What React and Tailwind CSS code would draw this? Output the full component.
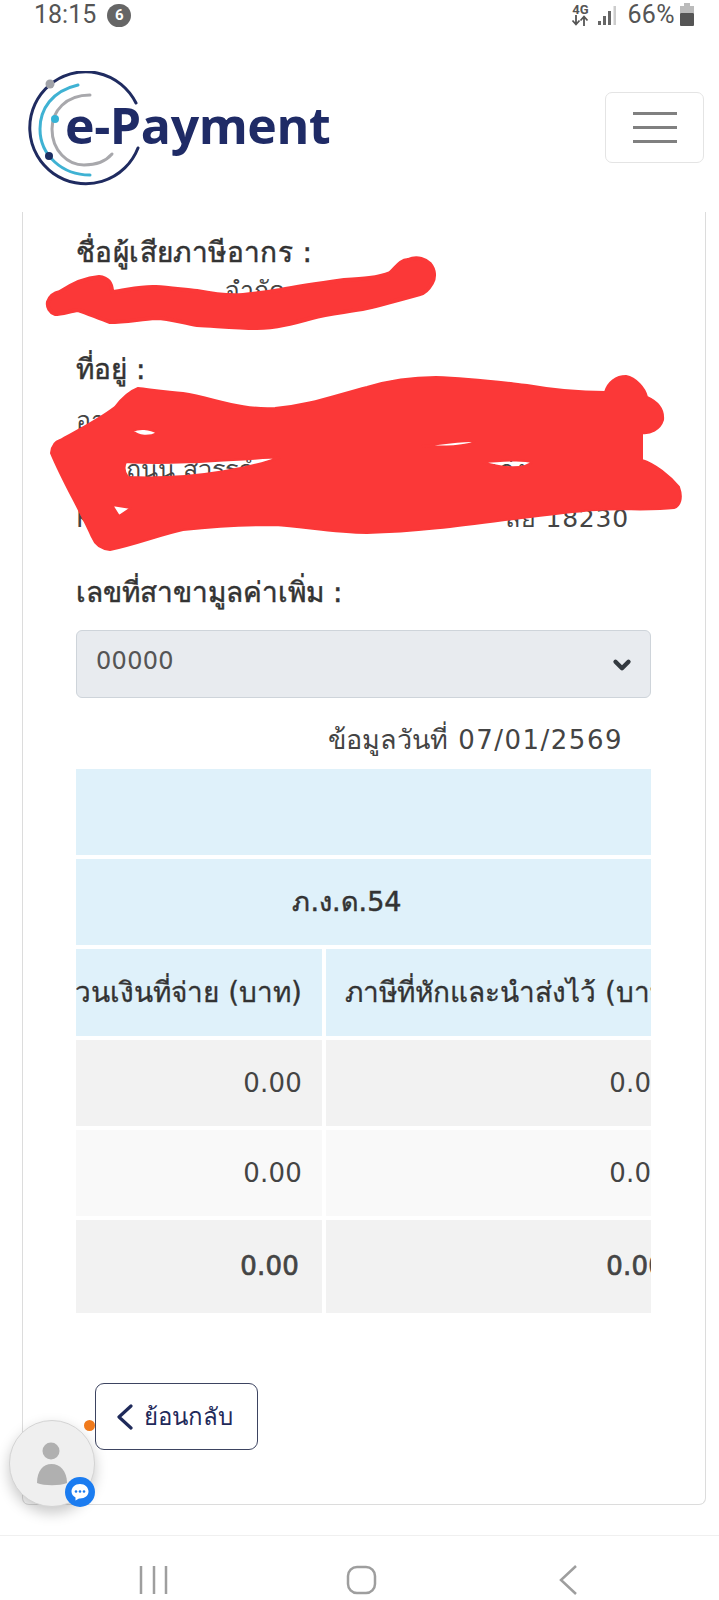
import React from "react";
import { ChevronDown } from "lucide-react";

const bodyFont = { fontFamily: '"DejaVu Sans", "Noto Sans", "Noto Sans CJK SC", sans-serif' };

const Logo = () => (
  <div className="relative w-[310px] h-[116px]">
    <svg width="116" height="116" viewBox="28 70 116 116" fill="none" className="absolute left-0 top-0">
      <path d="M136 102 A 56 56 0 1 0 138 147" stroke="#1f2b60" strokeWidth="3" strokeLinecap="round" />
      <path d="M78 84 C 52 90 40 108 40 128 C 40 154 62 174 90 174" stroke="#3fb2d3" strokeWidth="3" strokeLinecap="round" />
      <path d="M90 94 C 66 94 52 110 52 128 C 52 150 68 164 84 164 C 96 164 106 160 112 153" stroke="#a8a8ac" strokeWidth="3" strokeLinecap="round" />
      <circle cx="50" cy="83" r="4.5" fill="#a0a2a8" />
      <circle cx="55" cy="118" r="4" fill="#35b3d6" />
      <circle cx="49" cy="155" r="4" fill="#1c2f63" />
    </svg>
    <span
      className="absolute left-[37px] top-[19px] text-[50px] leading-[70px] font-bold text-[#1f2b66] whitespace-nowrap tracking-[-0.4px]"
      style={{ fontFamily: '"Open Sans", sans-serif' }}
    >
      e-Payment
    </span>
  </div>
);

const StatusBar = () => (
  <div className="h-[30px] flex items-center justify-between pl-[34px] pr-[24px] text-[#555]" style={{ fontFamily: "Roboto, sans-serif" }}>
    <div className="flex items-center gap-[11px]">
      <span className="text-[25px] leading-[28px]">18:15</span>
      <span className="w-[24px] h-[23px] rounded-full bg-[#666] text-white text-[15px] font-bold flex items-center justify-center">6</span>
    </div>
    <div className="flex items-center">
      <div className="flex flex-col items-center w-[18px] font-bold text-[#555]">
        <span className="text-[13px] leading-[11px]">4G</span>
        <svg width="18" height="11" viewBox="0 0 18 11" fill="none" stroke="#555" strokeWidth="1.8">
          <path d="M5 0 V9 M1.500 5.500 L5 9.500 L8.500 5.500 M13 11 V2 M9.500 5.500 L13 1.500 L16.500 5.500" />
        </svg>
      </div>
      <svg width="22" height="22" viewBox="0 0 22 22" className="ml-[8px]">
        <rect x="1" y="17" width="3" height="4" fill="#666" />
        <rect x="6" y="12" width="3" height="9" fill="#666" />
        <rect x="11" y="7" width="3" height="14" fill="#666" />
        <rect x="16.500" y="2" width="2.500" height="19" fill="#ccc" />
      </svg>
      <span className="text-[25px] leading-[28px] ml-[8px] tracking-[0.4px]">66%</span>
      <svg width="16" height="24" viewBox="0 0 16 24" className="ml-[4px]">
        <rect x="5" y="0" width="6" height="3" fill="#bbb" />
        <rect x="1" y="3" width="14" height="7" fill="#bbb" />
        <rect x="1" y="10" width="14" height="13" rx="1" fill="#555" />
      </svg>
    </div>
  </div>
);

const Header = () => (
  <div className="h-[182px] flex items-start justify-between pl-[28px] pr-[15px] pt-[41px]">
    <Logo />
    <button className="w-[99px] h-[71px] mt-[21px] border border-[#e4e4e4] rounded-[7px] flex flex-col items-center justify-center gap-[11px]">
      <span className="block w-[44px] h-[3px] bg-[#808080]" />
      <span className="block w-[44px] h-[3px] bg-[#808080]" />
      <span className="block w-[44px] h-[3px] bg-[#808080]" />
    </button>
  </div>
);

const Label = ({ children, className = "" }) => (
  <div className={"h-[36px] leading-[36px] text-[28px] [-webkit-text-stroke:0.5px] text-[#333] " + className}>{children}</div>
);

const ValueCell = ({ children, bold, bg }) => (
  <div className={"h-full flex items-center justify-end text-[26px] tracking-[0.2px] text-[#444] " + bg + (bold ? " pr-[23px] [-webkit-text-stroke:0.7px]" : " pr-[20px]")}>
    {children}
  </div>
);

const InvoiceTable = () => {
  const rows = [
    { bg: "bg-[#f2f2f2]", h: "h-[86px]" },
    { bg: "bg-[#f9f9f9]", h: "h-[86px]" },
    { bg: "bg-[#f2f2f2]", h: "h-[93px]", bold: true },
  ];
  return (
    <div className="w-[575px] overflow-hidden">
      <div className="-ml-[70px] w-[682px] flex flex-col gap-[4px]">
        <div className="h-[86px] bg-[#dff1fa]" />
        <div className="h-[86px] bg-[#dff1fa] flex items-center justify-center text-[27px] [-webkit-text-stroke:0.5px] text-[#333]">ภ.ง.ด.54</div>
        <div className="grid grid-cols-[316px_362px] gap-x-[4px] h-[87px] text-[28px] [-webkit-text-stroke:0.3px] text-[#333]">
          <div className="bg-[#dff1fa] flex items-center justify-end pr-[20px] whitespace-nowrap">จำนวนเงินที่จ่าย (บาท)</div>
          <div className="bg-[#dff1fa] flex items-center pl-[19px] whitespace-nowrap">ภาษีที่หักและนำส่งไว้ (บาท)</div>
        </div>
        {rows.map((r, i) => (
          <div key={i} className={"grid grid-cols-[316px_362px] gap-x-[4px] " + r.h}>
            <ValueCell bold={r.bold} bg={r.bg}>0.00</ValueCell>
            <ValueCell bold={r.bold} bg={r.bg}>0.00</ValueCell>
          </div>
        ))}
      </div>
    </div>
  );
};

const Card = () => (
  <div className="ml-[22px] w-[684px] h-[1293px] border-x border-b border-[#dcdcdc] rounded-b-[7px] pl-[53px] pr-[54px] pt-[23px] text-[#444]">
    <Label className="tracking-[0.4px]">ชื่อผู้เสียภาษีอากร :</Label>
    <div className="w-[209px] h-[40px] leading-[40px] text-[25px] text-right whitespace-nowrap">จำกัด</div>

    <Label className="mt-[41px]">ที่อยู่ :</Label>
    <div className="mt-[8px] text-[25px] leading-[49px]">
      <div className="h-[49px]">อาคาร</div>
      <div className="h-[49px] flex justify-between w-[450px] pl-[50px]">
        <span>ถนน สวรรค์</span>
        <span>แก่ง</span>
      </div>
      <div className="h-[49px] flex justify-between w-[553px] tracking-[0.8px]">
        <span>K</span>
        <span>ลัย 18230</span>
      </div>
    </div>

    <Label className="mt-[32px]">เลขที่สาขามูลค่าเพิ่ม :</Label>
    <div className="mt-[19px] h-[68px] bg-[#e8ebef] border border-[#ced4da] rounded-[6px] flex items-center justify-between pl-[19px] pr-[15px] text-[24px] tracking-[0.3px] text-[#555]">
      <span className="-mt-[6px]">00000</span>
      <ChevronDown size={26} strokeWidth={4} className="text-[#343a40] mt-[2px]" />
    </div>
    <div className="h-[71px] pt-[14px] pr-[28px] flex items-center justify-end gap-[10px] text-[26px] text-[#444]">
      <span className="text-[27px]">ข้อมูลวันที่</span>
      <span className="tracking-[1.500px]">07/01/2569</span>
    </div>

    <InvoiceTable />

    <button className="mt-[70px] ml-[19px] w-[163px] h-[67px] border-[1.5px] border-[#3d4461] rounded-[9px] flex items-center pl-[20px] gap-[10px] text-[24px] text-[#1f2a5a]">
      <svg width="18" height="26" viewBox="0 0 18 26" fill="none">
        <path d="M15 2 L3 13 L15 24" stroke="#1f2a5a" strokeWidth="3.2" strokeLinejoin="round" strokeLinecap="round" />
      </svg>
      <span>ย้อนกลับ</span>
    </button>
  </div>
);

const BottomNav = () => (
  <div className="mt-[30px] flex-1 border-t border-[#f0f0f0] flex items-start pt-[29px]">
    <svg width="719" height="30" viewBox="0 0 719 30" fill="none" stroke="#9e9e9e" strokeWidth="2.5">
      <path d="M141 1 V29 M154 1 V29 M166 1 V29" />
      <rect x="348" y="2" width="27" height="26" rx="9" />
      <path d="M576 1 L561 15 L576 29" />
    </svg>
  </div>
);

const ChatBubble = () => (
  <div className="absolute left-[9px] top-[1420px] w-[86px] h-[87px] rounded-full bg-[#efefef] border border-[#d4d4d4] shadow-[0_6px_14px_rgba(0,0,0,0.22)]">
    <svg width="84" height="85" viewBox="0 0 84 85" className="absolute left-0 top-0">
      <ellipse cx="41" cy="30" rx="8.5" ry="8.5" fill="#b0b0b0" />
      <path d="M27 62 C27 50 33 43 41.500 43 C50 43 57 50 57 62 C50 65 34 65 27 62 Z" fill="#b0b0b0" />
    </svg>
    <div className="absolute -right-[1px] -bottom-[1px] w-[30px] h-[30px] rounded-full bg-[#1b7cf0] flex items-center justify-center">
      <svg width="20" height="20" viewBox="0 0 20 20">
        <path d="M10 2 C15 2 18.500 5.500 18.500 9.500 C18.500 13.500 15 16.500 10 16.500 L9 16.500 L5.500 18.500 L5.500 15.500 C3 14 1.500 12 1.500 9.500 C1.500 5.500 5 2 10 2 Z" fill="#fff" />
        <circle cx="6" cy="9.500" r="1.300" fill="#1b7cf0" />
        <circle cx="10" cy="9.500" r="1.300" fill="#1b7cf0" />
        <circle cx="14" cy="9.500" r="1.300" fill="#1b7cf0" />
      </svg>
    </div>
  </div>
);

// red marker scribbles drawn over the name and address
const Scribbles = () => (
  <svg width="719" height="600" viewBox="0 0 719 600" className="absolute left-0 top-0 pointer-events-none">
    <path
      fill="#fb3838"
      stroke="#fb3838"
      strokeWidth="4"
      strokeLinejoin="round"
      d="M48 302 C50 296 55 293 60 292 C72 284 85 278 99 277 C108 278 112 282 112 292 C128 290 142 286 156 287 C170 288 185 290 197 291 C212 294 228 296 243 295 C256 294 268 292 280 290 C300 286 322 283 344 280 C362 279 378 278 390 273 C396 268 400 260 408 260 C418 256 426 260 430 264 C435 270 435 278 432 283 C428 290 425 293 420 294 C402 299 384 304 367 308 C348 312 330 313 312 318 C294 323 276 328 257 328 C237 328 217 326 197 325 C183 323 170 318 156 318 C140 319 125 322 110 322 C98 318 88 313 78 310 C70 311 62 314 55 314 C50 312 47 307 48 302 Z"
    />
    <path
      fillRule="evenodd"
      fill="#fb3838"
      stroke="#fb3838"
      strokeWidth="2"
      strokeLinejoin="round"
      d="M138 388 C155 390 170 392 183 393 C215 398 240 410 275 408 C310 405 335 395 367 387 C390 380 410 377 436 377 C470 378 500 382 527 385 C555 390 580 392 605 392 C608 382 616 376 626 376 C636 378 645 388 647 397 C658 402 664 410 663 420 C660 430 650 434 642 433 L642 460 C655 464 670 476 679 487 C683 498 680 506 674 508 C650 511 620 508 596 510 C565 512 535 517 505 520 C460 526 415 532 367 533 C335 533 305 527 275 525 C245 525 212 527 183 530 C160 535 135 545 110 550 C100 549 95 545 92 537 C80 510 62 480 51 453 C52 445 56 441 60 440 C78 430 98 420 115 407 C122 398 130 391 138 388 Z
      M133 431 C138 428 150 428 157 433 C150 437 138 437 133 431 Z
      M126 462 C170 465 230 460 281 457 C260 465 200 480 128 477 C124 472 124 466 126 462 Z
      M422 446 C440 444 460 440 475 441 C470 447 440 447 422 446 Z
      M482 462 C495 462 520 458 532 462 C525 470 500 468 482 462 Z
      M112 505 L131 508 L119 516 Z"
    />
  </svg>
);

const App = () => {
  return (
    <div className="relative w-[719px] h-[1600px] overflow-hidden bg-white flex flex-col" style={bodyFont}>
      <StatusBar />
      <Header />
      <Card />
      <BottomNav />
      <ChatBubble />
      <div className="absolute left-[84px] top-[1420px] w-[11px] h-[11px] rounded-full bg-[#f07a1c]" />
      <Scribbles />
    </div>
  );
};

export default App;
